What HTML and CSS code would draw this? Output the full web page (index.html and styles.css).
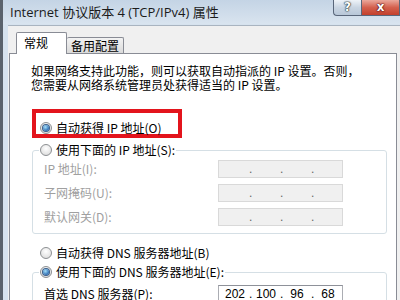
FILE: index.html
```html
<!DOCTYPE html>
<html lang="zh-CN">

<head>
    <meta charset="UTF-8">
    <meta name="viewport" content="width=device-width, initial-scale=1.0">
    <title>Internet 协议版本 4 (TCP/IPv4) 属性</title>
    <link rel="stylesheet" href="styles.css">
</head>

<body>
    <div class="window">
        <div class="titlebar">
            <span class="title">Internet 协议版本 4 (TCP/IPv4) 属性</span>
            <div class="caption">
                <span class="btn-help">?</span>
                <span class="btn-close">x</span>
            </div>
        </div>

        <div class="client">
            <div class="tabs">
                <span class="tab tab-active">常规</span>
                <span class="tab">备用配置</span>
            </div>

            <div class="panel">
                <p class="intro">如果网络支持此功能，则可以获取自动指派的 IP 设置。否则，<br>您需要从网络系统管理员处获得适当的 IP 设置。</p>

                <div class="highlight">
                    <div class="radio-row">
                        <span class="radio radio-on"></span>
                        <span>自动获得 IP 地址(O)</span>
                    </div>
                </div>

                <fieldset class="group">
                    <legend>
                        <div class="radio-row">
                            <span class="radio"></span>
                            <span>使用下面的 IP 地址(S):</span>
                        </div>
                    </legend>
                    <div class="fields">
                        <span class="label disabled">IP 地址(I):</span>
                        <div class="ip-field ip-off">
                            <span class="seg"></span><span class="dot">.</span><span class="seg"></span><span class="dot">.</span><span class="seg"></span><span class="dot">.</span><span class="seg"></span>
                        </div>
                        <span class="label disabled">子网掩码(U):</span>
                        <div class="ip-field ip-off">
                            <span class="seg"></span><span class="dot">.</span><span class="seg"></span><span class="dot">.</span><span class="seg"></span><span class="dot">.</span><span class="seg"></span>
                        </div>
                        <span class="label disabled">默认网关(D):</span>
                        <div class="ip-field ip-off">
                            <span class="seg"></span><span class="dot">.</span><span class="seg"></span><span class="dot">.</span><span class="seg"></span><span class="dot">.</span><span class="seg"></span>
                        </div>
                    </div>
                </fieldset>

                <div class="radio-row radio-line">
                    <span class="radio"></span>
                    <span>自动获得 DNS 服务器地址(B)</span>
                </div>

                <fieldset class="group group-dns">
                    <legend>
                        <div class="radio-row">
                            <span class="radio radio-on"></span>
                            <span>使用下面的 DNS 服务器地址(E):</span>
                        </div>
                    </legend>
                    <div class="fields fields-dns">
                        <span class="label">首选 DNS 服务器(P):</span>
                        <div class="ip-field">
                            <span class="seg">202</span><span class="dot">.</span><span class="seg">100</span><span class="dot">.</span><span class="seg">96</span><span class="dot">.</span><span class="seg">68</span>
                        </div>
                    </div>
                </fieldset>
            </div>
        </div>
    </div>
</body>

</html>
```

FILE: styles.css
```css
body {
    margin: 0;
}

.window {
    width: 400px;
    height: 300px;
    overflow: hidden;
    box-sizing: border-box;
    border-left: 3px solid #5a626c;
    background: #d6e2ee;
    display: flex;
    flex-direction: column;
    font-family: "Noto Sans CJK SC", sans-serif;
    font-size: 12px;
    color: #000;
}

/* title bar */
.titlebar {
    display: flex;
    height: 24px;
    flex-shrink: 0;
    background: linear-gradient(#c4d4e5, #d9e4ef);
}

.title {
    padding-left: 7px;
    line-height: 24px;
    font-family: "Open Sans", "Noto Sans CJK SC", sans-serif;
    font-size: 13px;
    color: #1b1b1b;
}

.caption {
    margin-left: auto;
    display: flex;
    align-self: flex-start;
}

.btn-help,
.btn-close {
    height: 16px;
    box-sizing: border-box;
    border: 1px solid #59667a;
    border-top: none;
    font-family: "DejaVu Sans", sans-serif;
    font-weight: bold;
    font-size: 12px;
    line-height: 14px;
    text-align: center;
    color: #fff;
    text-shadow: 0 0 1px #233, 0 0 1px #233, 0 0 2px #233;
}

.btn-help {
    width: 28px;
    border-radius: 0 0 0 4px;
    border-right: none;
    background: linear-gradient(#eef3f8, #c9d5e2 50%, #b8c7d8);
}

.btn-close {
    width: 39px;
    background: linear-gradient(#eaa89c, #d4604d 50%, #c2402c);
    text-shadow: 0 0 1px #511, 0 0 1px #511, 0 0 2px #511;
}

/* dialog body */
.client {
    flex: 1;
    display: flex;
    flex-direction: column;
    margin: 1px 0 0 5px;
    border-top: 1px solid #a9b4c0;
    background: #f0f0f0;
    padding: 6px 3px 0 1px;
}

.tabs {
    display: flex;
    align-items: flex-end;
    padding-left: 7px;
}

.tab {
    height: 15px;
    line-height: 15px;
    padding: 0 4px;
    border: 1px solid #898c95;
    border-bottom: none;
    border-radius: 2px 2px 0 0;
    background: linear-gradient(#f3f3f3, #dadada);
}

.tab-active {
    height: 21px;
    line-height: 20px;
    padding: 0 18px 0 7px;
    margin-bottom: -1px;
    background: #fff;
    position: relative;
    z-index: 1;
}

.tab-active + .tab {
    border-left: none;
}

.panel {
    flex: 1;
    border: 1px solid #898c95;
    background: #fff;
    padding: 10px 0 0 22px;
}

.intro {
    margin: 0 0 0 -1px;
    line-height: 14px;
}

.highlight {
    margin-top: 17px;
    width: 150px;
    height: 29px;
    box-sizing: border-box;
    border: 4px solid #e3141c;
    padding: 9px 0 0 4px;
}

.radio-row {
    display: flex;
    align-items: center;
    gap: 4px;
    height: 12px;
    line-height: 12px;
    white-space: nowrap;
}

.radio {
    width: 12px;
    height: 12px;
    box-sizing: border-box;
    flex-shrink: 0;
    border-radius: 50%;
    border: 1px solid #8c8f92;
    background: radial-gradient(circle at 50% 35%, #ffffff, #d6d6d6);
    display: flex;
    align-items: center;
    justify-content: center;
}

.radio-on::after {
    content: "";
    width: 6px;
    height: 6px;
    border-radius: 50%;
    background: radial-gradient(circle at 40% 35%, #a4e0fb, #1d5ea9 80%);
    box-shadow: 0 0 0 1px #3a5e8a;
}

.radio-line {
    margin-top: 13px;
    padding-left: 8px;
}

/* group boxes */
.group {
    margin: 6px 0 0;
    width: 355px;
    min-width: 0;
    box-sizing: border-box;
    border: 1px solid #d5dfe5;
    border-radius: 3px;
    padding: 0 6px 7px;
}

.group legend {
    padding: 0 1px;
}

.group-dns {
    margin-top: 7px;
}

.fields {
    display: grid;
    grid-template-columns: 174px 125px;
    row-gap: 6px;
    align-items: center;
    margin-top: 4px;
    padding-left: 5px;
}

.fields-dns {
    margin-top: 7px;
}

.label {
    line-height: 12px;
    white-space: nowrap;
}

.disabled {
    color: #a0a0a0;
}

.ip-field {
    height: 18px;
    box-sizing: border-box;
    display: flex;
    overflow: hidden;
    padding-left: 2px;
    border: 1px solid #abadb3;
    border-top-color: #8e9199;
    background: #fff;
    font-family: "Liberation Sans", sans-serif;
    font-size: 12px;
    line-height: 16px;
}

.ip-off {
    border-color: #d9d9d9;
    background: #f0f0f0;
}

.seg {
    width: 28px;
    text-align: center;
}

.seg:last-child {
    flex: 1;
}

.dot {
    width: 3px;
    text-align: center;
}

.ip-off .dot {
    color: #666;
}
```
